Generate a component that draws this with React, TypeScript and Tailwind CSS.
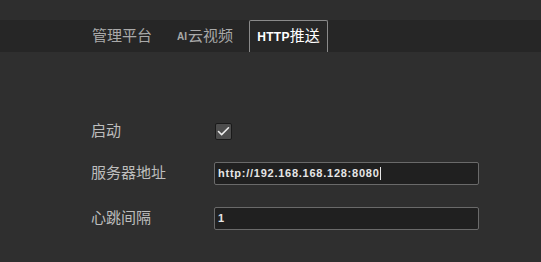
import { Check } from 'lucide-react';

const FONT = "font-['Liberation_Sans','Noto_Sans_CJK_SC',sans-serif]";

const ROWS = [
  { label: '服务器地址', value: 'http://192.168.168.128:8080', caret: true },
  { label: '心跳间隔', value: '1', caret: false },
];

export default function App() {
  return (
    <div className={`w-[541px] h-[262px] bg-[#2f2f2f] overflow-hidden ${FONT}`}>
      {/* top spacer */}
      <div className="h-[20px] bg-[#2e2e2e]" />

      {/* tab strip */}
      <div className="h-[32px] bg-[#262626] flex items-stretch pl-[83px] gap-[7px]">
        <div className="px-[9px] flex items-center text-[15px] text-[#a9a9a9]">管理平台</div>
        <div className="px-[9px] flex items-center text-[15px] text-[#a9a9a9]">
          <span className="text-[10px] font-bold mr-[1px]">AI</span>云视频
        </div>
        <div className="w-[79px] flex items-center justify-center rounded-t-[2px] border-x border-t border-[#8a8a8a] bg-[#272727] text-white">
          <span className="text-[12px] font-bold tracking-[0.3px]">HTTP</span>
          <span className="text-[15px]">推送</span>
        </div>
      </div>

      {/* form */}
      <div className="pl-[91px] pr-[62px]">
        <div className="mt-[68px] h-[23px] flex items-center">
          <div className="w-[124px] text-[15px] text-[#bdbdbd]">启动</div>
          <div className="w-[17px] h-[17px] bg-[#4d4d4d] border border-[#1a1a1a] rounded-[2px] flex items-center justify-center">
            <Check size={15} strokeWidth={2.5} className="text-[#ececec]" />
          </div>
        </div>

        {ROWS.map((row, i) => (
          <div key={row.label} className={`${i === 0 ? 'mt-[19px]' : 'mt-[22px]'} h-[23px] flex items-center`}>
            <div className="w-[123px] text-[15px] text-[#bdbdbd]">{row.label}</div>
            <div className="flex-1 h-[23px] bg-[#202020] border border-[#6a6a6a] rounded-[2px] flex items-center pl-[3px]">
              <span className="text-[11px] font-bold text-[#e6e6e6] leading-none tracking-[0.75px]">{row.value}</span>
              {row.caret && <span className="w-px h-[13px] bg-[#e6e6e6]" />}
            </div>
          </div>
        ))}
      </div>
    </div>
  );
}
